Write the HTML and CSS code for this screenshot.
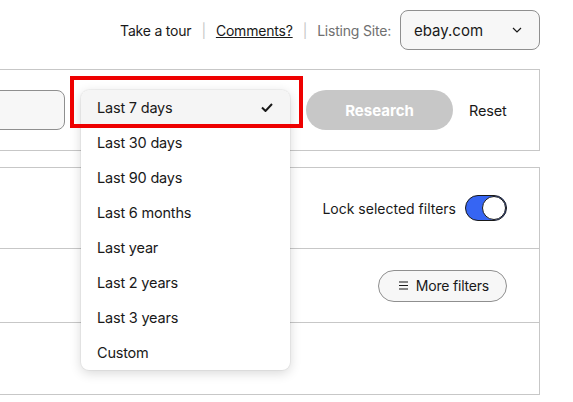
FILE: index.html
```
<!DOCTYPE html>
<html lang="en">
<head>
    <meta charset="UTF-8">
    <meta name="viewport" content="width=device-width, initial-scale=1.0">
    <title>Product Research</title>
    <link rel="stylesheet" href="styles.css">
</head>
<body>
    <div class="page">
        <div class="top-bar">
            <a class="top-link" href="#">Take a tour</a>
            <span class="sep">|</span>
            <a class="top-link underline" href="#">Comments?</a>
            <span class="sep">|</span>
            <span class="site-label">Listing Site:</span>
            <div class="site-select">
                <span>ebay.com</span>
                <svg width="10" height="6" viewBox="0 0 10 6"><path d="M1 1l4 4 4-4" fill="none" stroke="#191919" stroke-width="1.2"/></svg>
            </div>
        </div>

        <div class="panel search-panel">
            <div class="search-box"></div>
            <div class="range-wrap">
                <!-- closed select sits under the open menu -->
                <div class="range-select"></div>
                <ul class="menu">
                    <li class="menu-item selected">Last 7 days
                        <svg width="12" height="9" viewBox="0 0 12 9"><path d="M1 4.5l3.5 3.5 6.5-7" fill="none" stroke="#191919" stroke-width="2"/></svg>
                    </li>
                    <li class="menu-item">Last 30 days</li>
                    <li class="menu-item">Last 90 days</li>
                    <li class="menu-item">Last 6 months</li>
                    <li class="menu-item">Last year</li>
                    <li class="menu-item">Last 2 years</li>
                    <li class="menu-item">Last 3 years</li>
                    <li class="menu-item">Custom</li>
                </ul>
                <div class="highlight"></div>
            </div>
            <button class="research-btn" disabled>Research</button>
            <button class="reset-btn">Reset</button>
        </div>

        <div class="panel filter-panel">
            <div class="filter-row lock-row">
                <span>Lock selected filters</span>
                <span class="toggle"><span class="knob"></span></span>
            </div>
            <div class="filter-row more-row">
                <button class="more-btn">
                    <svg width="9" height="9" viewBox="0 0 9 9"><path d="M0 1h9M0 4.5h9M0 8h9" stroke="#191919" stroke-width="1.2"/></svg>
                    More filters
                </button>
            </div>
            <div class="filter-row empty-row"></div>
        </div>
    </div>
</body>
</html>
```
FILE: styles.css
```
body {
    margin: 0;
    font-family: 'Inter', 'Liberation Sans', sans-serif;
    font-size: 14px;
    color: #191919;
    background: #fff;
    overflow: hidden;
}
.page {
    padding-right: 33px;
}
.top-bar {
    display: flex;
    justify-content: flex-end;
    align-items: center;
    padding-top: 10px;
    height: 40px;
    letter-spacing: -0.2px;
}
.top-link {
    color: #191919;
    text-decoration: none;
}
.underline {
    text-decoration: underline;
}
.sep {
    color: #c7c7c7;
    margin: 0 10px;
}
.site-label {
    color: #707070;
    margin-right: 9px;
}
.site-select {
    box-sizing: border-box;
    width: 140px;
    height: 40px;
    display: flex;
    align-items: center;
    justify-content: space-between;
    padding: 0 17px 0 13px;
    border: 1px solid #8f8f8f;
    border-radius: 8px;
    background: #f7f7f7;
    font-size: 15px;
    letter-spacing: 0;
}
.panel {
    border: 1px solid #c7c7c7;
    margin-left: -60px;
    background: #fff;
}
.search-panel {
    margin-top: 19px;
    display: flex;
    align-items: center;
    gap: 16px;
    padding: 20px 32px 20px 16px;
}
.search-box {
    flex: 1;
    height: 40px;
    box-sizing: border-box;
    border: 1px solid #8f8f8f;
    border-radius: 8px;
    background: #f7f7f7;
}
.range-wrap {
    position: relative;
    width: 209px;
}
.range-select {
    box-sizing: border-box;
    height: 40px;
    border: 1px solid #8f8f8f;
    border-radius: 8px;
    background: #f7f7f7;
}
.menu {
    position: absolute;
    top: 0;
    left: 0;
    right: 0;
    margin: 0;
    padding: 0;
    list-style: none;
    background: #fff;
    border-radius: 8px;
    box-shadow: 0 0 0 1px rgba(0, 0, 0, 0.04), 0 3px 12px rgba(0, 0, 0, 0.16);
    z-index: 2;
}
.menu-item {
    height: 35px;
    display: flex;
    align-items: center;
    justify-content: space-between;
    padding: 0 17px 0 16px;
    font-size: 14.5px;
    letter-spacing: -0.2px;
}
.menu-item.selected {
    background: #f5f5f5;
    border-radius: 8px 8px 0 0;
}
.highlight {
    position: absolute;
    top: -14px;
    left: -11px;
    width: 233px;
    height: 52px;
    box-sizing: border-box;
    border: 4px solid #ee0000;
    z-index: 3;
}
.research-btn {
    width: 147px;
    height: 40px;
    border: none;
    border-radius: 20px;
    background: #c7c7c7;
    color: #fff;
    font-family: inherit;
    font-size: 15px;
    font-weight: 700;
}
.reset-btn {
    width: 38px;
    border: none;
    background: none;
    padding: 0;
    font-family: inherit;
    font-size: 14.5px;
    letter-spacing: -0.2px;
    color: #191919;
    text-align: left;
}
.filter-panel {
    margin-top: 16px;
}
.filter-row {
    display: flex;
    justify-content: flex-end;
    align-items: center;
    padding-right: 32px;
    border-bottom: 1px solid #c7c7c7;
}
.lock-row {
    height: 80px;
    gap: 9px;
}
.more-row {
    height: 73px;
}
.empty-row {
    height: 71px;
    border-bottom: none;
}
.toggle {
    position: relative;
    width: 42px;
    height: 26px;
    box-sizing: border-box;
    border: 1px solid #191919;
    border-radius: 13px;
    background: #3665f3;
}
.knob {
    position: absolute;
    top: 0;
    right: 0;
    width: 24px;
    height: 24px;
    box-sizing: border-box;
    border: 1px solid #191919;
    border-radius: 50%;
    background: #fff;
}
.more-btn {
    display: flex;
    align-items: center;
    gap: 8px;
    height: 32px;
    padding: 0 17px 0 20px;
    border: 1px solid #8f8f8f;
    border-radius: 16px;
    background: #f7f7f7;
    font-family: inherit;
    font-size: 14px;
    letter-spacing: -0.2px;
    color: #191919;
}
```
